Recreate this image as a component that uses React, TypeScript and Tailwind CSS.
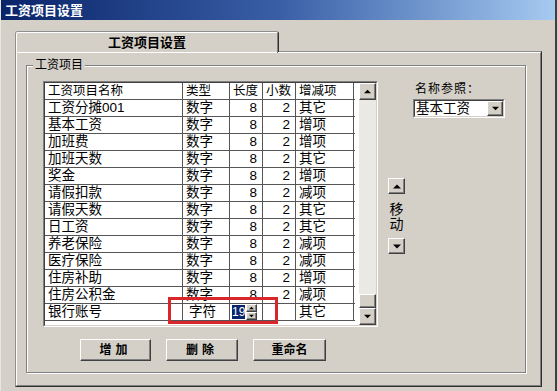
import React from "react";

const rows: [string, string, string, string, string][] = [
  ["工资分摊001", "数字", "8", "2", "其它"],
  ["基本工资", "数字", "8", "2", "增项"],
  ["加班费", "数字", "8", "2", "增项"],
  ["加班天数", "数字", "8", "2", "其它"],
  ["奖金", "数字", "8", "2", "增项"],
  ["请假扣款", "数字", "8", "2", "减项"],
  ["请假天数", "数字", "8", "2", "其它"],
  ["日工资", "数字", "8", "2", "其它"],
  ["养老保险", "数字", "8", "2", "减项"],
  ["医疗保险", "数字", "8", "2", "减项"],
  ["住房补助", "数字", "8", "2", "增项"],
  ["住房公积金", "数字", "8", "2", "减项"],
];

const raised =
  "border border-t-white border-l-white border-r-[#404040] border-b-[#404040] shadow-[inset_-1px_-1px_0_#808080] bg-[#d4d0c8]";

function Up({ size = 7 }: { size?: number }) {
  return (
    <svg width={size} height={Math.ceil(size / 2) + 1} viewBox="0 0 8 5">
      <polygon points="0,4.5 4,0.5 8,4.5" fill="#000" />
    </svg>
  );
}
function Down({ size = 7 }: { size?: number }) {
  return (
    <svg width={size} height={Math.ceil(size / 2) + 1} viewBox="0 0 8 5">
      <polygon points="0,0.5 8,0.5 4,4.5" fill="#000" />
    </svg>
  );
}

function Cell({
  w,
  children,
  right,
}: {
  w: string;
  children?: React.ReactNode;
  right?: boolean;
}) {
  return (
    <div
      className={`${w} h-full flex items-center border-r border-[#555] ${
        right ? "justify-end pr-[5px]" : "pl-[3px]"
      } whitespace-nowrap overflow-hidden`}
    >
      {children}
    </div>
  );
}

export default function App() {
  return (
    <div className="w-[558px] h-[391px] overflow-hidden bg-[#d4d0c8] relative font-['Liberation_Sans','Noto_Sans_CJK_SC',sans-serif] text-black">
      <div className="w-[557px] h-[391px] border-r-2 border-r-[#404040] border-l border-l-[#e8e6e0]">
        {/* title bar */}
        <div className="h-[20px] bg-gradient-to-r from-[#0a246a] via-[#3a5ea6] to-[#a6caf0] flex items-center pl-[4px]">
          <span className="text-white font-bold text-[13px] leading-none">工资项目设置</span>
        </div>

        <div className="pl-[14px] pt-[11px]">
          {/* tab */}
          <div className="flex items-end">
            <div className="w-[264px] h-[21px] border-t border-l border-r border-t-[#909090] border-l-[#909090] border-r-[#303030] rounded-tl-[3px] rounded-tr-[3px] relative z-10 -mb-[1px] bg-[#d4d0c8]">
              <div className="h-[21px] border-t border-l border-r border-t-white border-l-white border-r-[#808080] rounded-tl-[2px] rounded-tr-[2px] flex items-center justify-center pb-[2px]">
                <span className="font-bold text-[13px] leading-none">工资项目设置</span>
              </div>
            </div>
          </div>
          {/* panel */}
          <div className="w-[527px] h-[336px] border border-t-[#909090] border-l-[#909090] border-r-[#303030] border-b-[#303030]">
            <div className="h-full border border-t-white border-l-white border-r-[#808080] border-b-[#808080] pl-[9px] pt-[12px]">
              {/* group box */}
              <div className="relative w-[500px] h-[308px] border border-[#808080] shadow-[inset_1px_1px_0_#ffffff,1px_1px_0_#ffffff]">
                <span className="absolute left-[6px] -top-[9px] px-[2px] bg-[#d4d0c8] text-[12px] leading-[16px]">
                  工资项目
                </span>
                <div className="pl-[16px] pt-[15px]">
                  <div className="flex items-start">
                    {/* list */}
                    <div className="w-[335px] h-[246px] border border-t-[#808080] border-l-[#808080] border-r-white border-b-white">
                      <div className="h-full flex border border-t-[#404040] border-l-[#404040] border-r-[#d4d0c8] border-b-[#d4d0c8] bg-white">
                        <div className="w-[310px] h-full text-[13.5px] leading-[16px]">
                          <div className="flex h-[17px] border-b border-[#555] text-[12.5px]">
                            <Cell w="w-[138px]">工资项目名称</Cell>
                            <Cell w="w-[47px]">类型</Cell>
                            <Cell w="w-[33px]">长度</Cell>
                            <Cell w="w-[33px]">小数</Cell>
                            <Cell w="w-[58px]">增减项</Cell>
                          </div>
                          {rows.map((r) => (
                            <div key={r[0]} className="flex h-[17px] border-b border-[#555]">
                              <Cell w="w-[138px]">{r[0]}</Cell>
                              <Cell w="w-[47px]">{r[1]}</Cell>
                              <Cell w="w-[33px]" right>{r[2]}</Cell>
                              <Cell w="w-[33px]" right>{r[3]}</Cell>
                              <Cell w="w-[58px]">{r[4]}</Cell>
                            </div>
                          ))}
                          <div className="flex h-[17px] border-b border-[#555]">
                            <Cell w="w-[138px]">银行账号</Cell>
                            <div className="w-[47px] h-full flex items-center pl-[6px] border-r border-[#555] whitespace-nowrap">字符</div>
                            <div className="w-[33px] h-full flex items-center pl-[2px] border-r border-[#555]">
                              <span className="w-[13px] h-[14px] bg-[#0a246a] text-white text-[12px] leading-[14px] text-center">19</span>
                              <div className="w-[11px] h-[16px] ml-[1px] flex flex-col">
                                <div className={`${raised} h-[8px] flex items-center justify-center`}>
                                  <Up size={5} />
                                </div>
                                <div className={`${raised} h-[8px] flex items-center justify-center`}>
                                  <Down size={5} />
                                </div>
                              </div>
                            </div>
                            <div className="w-[33px] h-full border-r border-[#555]" />
                            <Cell w="w-[58px]">其它</Cell>
                          </div>
                        </div>
                        <div className="w-[4px]" />
                        {/* scrollbar */}
                        <div className="w-[17px] h-full flex flex-col bg-[#ebe9e4]">
                          <div className={`${raised} h-[17px] flex items-center justify-center`}>
                            <Up />
                          </div>
                          <div className="flex-1" />
                          <div className={`${raised} h-[14px]`} />
                          <div className={`${raised} h-[17px] flex items-center justify-center`}>
                            <Down />
                          </div>
                        </div>
                      </div>
                    </div>

                    {/* move controls */}
                    <div className="ml-[10px] mt-[97px] w-[17px] flex flex-col items-center">
                      <div className={`${raised} w-[17px] h-[16px] flex items-center justify-center`}>
                        <Up size={8} />
                      </div>
                      <span className="mt-[8px] text-[14px] leading-[15px]">移</span>
                      <span className="text-[14px] leading-[15px]">动</span>
                      <div className={`${raised} mt-[6px] w-[17px] h-[16px] flex items-center justify-center`}>
                        <Down size={8} />
                      </div>
                    </div>

                    {/* name reference */}
                    <div className="ml-[8px] flex flex-col">
                      <span className="pl-[2px] text-[12px] leading-[16px] tracking-[1px]">名称参照：</span>
                      <div className="mt-[2px] w-[92px] h-[19px] border border-t-[#808080] border-l-[#808080] border-r-white border-b-white">
                        <div className="h-full flex border border-t-[#404040] border-l-[#404040] border-r-[#d4d0c8] border-b-[#d4d0c8] bg-white">
                          <span className="flex-1 pl-[1px] text-[13.5px] leading-[15px]">基本工资</span>
                          <div className={`${raised} w-[16px] h-full flex items-center justify-center`}>
                            <Down />
                          </div>
                        </div>
                      </div>
                    </div>
                  </div>

                  {/* buttons */}
                  <div className="flex gap-[15px] ml-[37px] mt-[12px]">
                    <button className={`${raised} w-[71px] h-[22px] text-[12px] font-bold tracking-[4px] flex items-center justify-center`}>
                      增加
                    </button>
                    <button className={`${raised} w-[72px] h-[22px] text-[12px] font-bold tracking-[4px] flex items-center justify-center`}>
                      删除
                    </button>
                    <button className={`${raised} w-[73px] h-[22px] text-[12px] font-bold flex items-center justify-center`}>
                      重命名
                    </button>
                  </div>
                </div>
              </div>
            </div>
          </div>
        </div>
      </div>

      {/* red annotation box */}
      <div className="absolute left-[168px] top-[297px] w-[110px] h-[27px] border-[3px] border-[#d8262a]" />
    </div>
  );
}
